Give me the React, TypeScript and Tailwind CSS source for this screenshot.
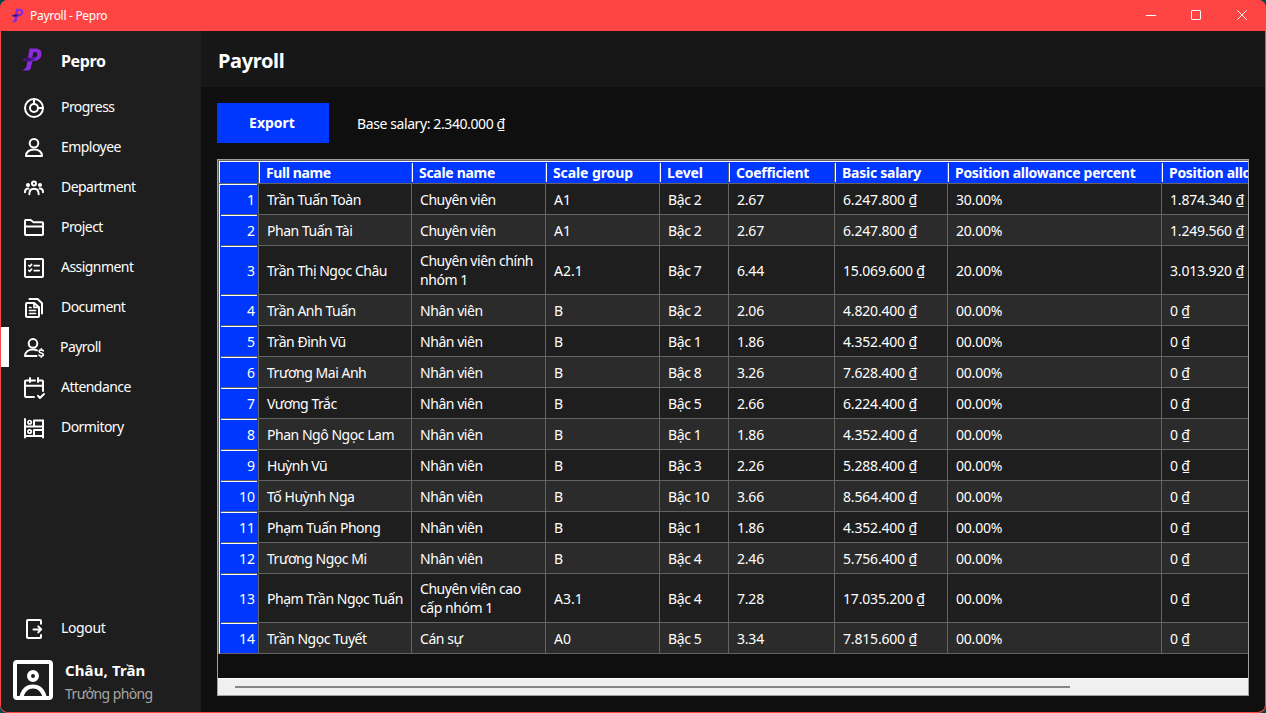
import type { ReactNode } from "react";

function Icon({ children }: { children: ReactNode }) {
  return (
    <svg
      className="h-6 w-6 shrink-0"
      viewBox="0 0 24 24"
      fill="none"
      stroke="#ffffff"
      strokeWidth="2"
      strokeLinecap="round"
      strokeLinejoin="round"
    >
      {children}
    </svg>
  );
}

const icons = {
  progress: (
    <Icon>
      <circle cx="12" cy="12" r="9" />
      <circle cx="12" cy="12" r="4" />
      <path d="M12 3v5M16 12h5" />
    </Icon>
  ),
  employee: (
    <Icon>
      <circle cx="12" cy="7.3" r="4.3" />
      <path d="M4 20C4 15.8 7.4 13.4 12 13.4s8 2.4 8 6.6z" />
    </Icon>
  ),
  department: (
    <Icon>
      <circle cx="12" cy="7.6" r="2" />
      <circle cx="6" cy="9" r="2.1" fill="#ffffff" stroke="none" />
      <circle cx="18" cy="9" r="2.1" fill="#ffffff" stroke="none" />
      <path d="M7.3 18.2c0-3.6 2-5.4 4.7-5.4s4.7 1.8 4.7 5.4M3 16.2c0-2.4 1-3.6 3.4-3.6M21 16.2c0-2.4-1-3.6-3.4-3.6" />
    </Icon>
  ),
  project: (
    <Icon>
      <path d="M3 18.2V4.8Q3 4 3.8 4H8.6L11.6 6.2H20.2Q21 6.2 21 7V18.2Q21 19 20.2 19H3.8Q3 19 3 18.2Z" />
      <path d="M3 10.5H21" />
    </Icon>
  ),
  assignment: (
    <Icon>
      <rect x="3" y="3" width="18" height="18" rx="1" />
      <path d="M6.8 9.5l1 1L9.6 8.4M6.8 14.3l1 1 1.8-2.1M12.2 9.6h5M12.2 14.6h5" strokeWidth="1.7" />
    </Icon>
  ),
  document: (
    <Icon>
      <path d="M5 7H12.2L17 11.2V20Q17 21 16 21H5Q4 21 4 20V8Q4 7 5 7Z" />
      <path d="M12 7.2V11.4H16.6M7.5 11.5H9M7.5 14.5H13.5M7.5 17.5H13.5" strokeWidth="1.7" />
      <path d="M7.5 3H15.6L20 7.2V17.6" />
    </Icon>
  ),
  payroll: (
    <Icon>
      <circle cx="11" cy="7.4" r="4.3" />
      <path d="M15 14.4C13.8 13.8 12.6 13.5 11 13.5C6.4 13.5 3.1 16 3 20H14.5" />
      <path
        d="M21.3 14.9C20.8 14.2 20 13.9 19.2 13.9C18 13.9 17.2 14.5 17.2 15.4C17.2 17.6 21.4 16.3 21.4 18.6C21.4 19.6 20.4 20.1 19.3 20.1C18.4 20.1 17.5 19.8 17 19.1M19.3 12.8V13.8M19.3 20.2V21.3"
        strokeWidth="1.6"
      />
    </Icon>
  ),
  attendance: (
    <Icon>
      <path d="M12 21H4Q3 21 3 20V5.5Q3 4.5 4 4.5H7M8 4.5H13M17 4.5H20Q21 4.5 21 5.5V15M3 9.8H21M8 2V6M16 2V6" />
      <path d="M16 19.8L18 22L22 18" />
    </Icon>
  ),
  dormitory: (
    <Icon>
      <path d="M3 3V21.5M21 4.5V21.5M3 10.5H21M3 20H21" />
      <path d="M12 10V4.5H20.6M12 20V14H20.6" />
      <circle cx="7.6" cy="6.2" r="1.7" strokeWidth="1.7" />
      <circle cx="7.6" cy="15.5" r="1.7" strokeWidth="1.7" />
    </Icon>
  ),
  logout: (
    <Icon>
      <path
        d="M19 7.6V3.9Q19 3 18.1 3H5.9Q5 3 5 3.9V20.1Q5 21 5.9 21H18.1Q19 21 19 20.1V17.2"
        strokeLinecap="butt"
      />
      <path d="M11.5 12.4H19M16.3 9.4L19.2 12.4L16.3 15.4" />
    </Icon>
  ),
};

function Logo({ className }: { className: string }) {
  return (
    <svg className={className} viewBox="0 0 21 23">
      <defs>
        <linearGradient id="logo-sweep" x1="0" y1="0" x2="1" y2="0">
          <stop offset="0" stopColor="#5b1a9e" />
          <stop offset="0.4" stopColor="#35106b" />
          <stop offset="1" stopColor="#8a2be2" />
        </linearGradient>
      </defs>
      <path
        d="M8 0.5H13.5C18 0.5 20.5 2.8 20 6.6C19.5 11 16 13.3 11.5 13.3H11L9.3 20Q8.7 22.5 6 22.5H0C3.5 21.5 4.6 20 5.2 17.5Z M12 4L10.6 9.8H12.2C14.4 9.8 15.6 8.6 15.9 6.9C16.2 5 15.2 4 13.4 4Z"
        fill="#8a2be2"
        fillRule="evenodd"
      />
      <path d="M1 11.5Q3.8 9.6 7 9.8L16.4 9.3Q13.5 13.3 9.5 13.3L5 13.4Q2.5 13.4 1 11.5Z" fill="url(#logo-sweep)" />
    </svg>
  );
}

const navItems = [
  { label: "Progress", icon: icons.progress },
  { label: "Employee", icon: icons.employee },
  { label: "Department", icon: icons.department },
  { label: "Project", icon: icons.project },
  { label: "Assignment", icon: icons.assignment },
  { label: "Document", icon: icons.document },
  { label: "Payroll", icon: icons.payroll, active: true },
  { label: "Attendance", icon: icons.attendance },
  { label: "Dormitory", icon: icons.dormitory },
];

const columns = [
  { title: "Full name", width: "w-[153px]", head: "tracking-[-0.4px]", body: "tracking-[-0.47px]" },
  { title: "Scale name", width: "w-[134px]", head: "tracking-[-0.3px]", body: "tracking-[-0.45px]" },
  { title: "Scale group", width: "w-[114px]", head: "tracking-[-0.1px]", body: "tracking-normal" },
  { title: "Level", width: "w-[69px]", head: "tracking-[-0.1px]", body: "tracking-[-0.38px]" },
  { title: "Coefficient", width: "w-[106px]", head: "tracking-[-0.27px]", body: "tracking-[-0.2px]" },
  { title: "Basic salary", width: "w-[113px]", head: "tracking-[-0.25px]", body: "tracking-[-0.18px]" },
  { title: "Position allowance percent", width: "w-[214px]", head: "tracking-[-0.3px]", body: "tracking-[-0.2px]" },
  { title: "Position allowance", width: "w-[160px]", head: "tracking-[-0.3px]", body: "tracking-[-0.18px]" },
];

const rows = [
  ["Trần Tuấn Toàn", "Chuyên viên", "A1", "Bậc 2", "2.67", "6.247.800 ₫", "30.00%", "1.874.340 ₫"],
  ["Phan Tuấn Tài", "Chuyên viên", "A1", "Bậc 2", "2.67", "6.247.800 ₫", "20.00%", "1.249.560 ₫"],
  ["Trần Thị Ngọc Châu", "Chuyên viên chính\nnhóm 1", "A2.1", "Bậc 7", "6.44", "15.069.600 ₫", "20.00%", "3.013.920 ₫"],
  ["Trần Anh Tuấn", "Nhân viên", "B", "Bậc 2", "2.06", "4.820.400 ₫", "00.00%", "0 ₫"],
  ["Trần Đình Vũ", "Nhân viên", "B", "Bậc 1", "1.86", "4.352.400 ₫", "00.00%", "0 ₫"],
  ["Trương Mai Anh", "Nhân viên", "B", "Bậc 8", "3.26", "7.628.400 ₫", "00.00%", "0 ₫"],
  ["Vương Trắc", "Nhân viên", "B", "Bậc 5", "2.66", "6.224.400 ₫", "00.00%", "0 ₫"],
  ["Phan Ngô Ngọc Lam", "Nhân viên", "B", "Bậc 1", "1.86", "4.352.400 ₫", "00.00%", "0 ₫"],
  ["Huỳnh Vũ", "Nhân viên", "B", "Bậc 3", "2.26", "5.288.400 ₫", "00.00%", "0 ₫"],
  ["Tố Huỳnh Nga", "Nhân viên", "B", "Bậc 10", "3.66", "8.564.400 ₫", "00.00%", "0 ₫"],
  ["Phạm Tuấn Phong", "Nhân viên", "B", "Bậc 1", "1.86", "4.352.400 ₫", "00.00%", "0 ₫"],
  ["Trương Ngọc Mi", "Nhân viên", "B", "Bậc 4", "2.46", "5.756.400 ₫", "00.00%", "0 ₫"],
  ["Phạm Trần Ngọc Tuấn", "Chuyên viên cao\ncấp nhóm 1", "A3.1", "Bậc 4", "7.28", "17.035.200 ₫", "00.00%", "0 ₫"],
  ["Trần Ngọc Tuyết", "Cán sự", "A0", "Bậc 5", "3.34", "7.815.600 ₫", "00.00%", "0 ₫"],
];

function TitleBar() {
  return (
    <div className="flex h-[31px] shrink-0 items-center bg-[#ff4444] pl-[11px]">
      <Logo className="h-[15px] w-[13px]" />
      <span className="ml-1.5 text-[12px] tracking-[-0.3px] text-white">Payroll - Pepro</span>
      <svg className="ml-auto h-[31px] w-[138px]" viewBox="0 0 138 31" fill="none" stroke="#ffffff">
        <path d="M18 15.5H28" />
        <rect x="63.5" y="10.5" width="9" height="9" rx="0.6" />
        <path d="M109.2 10.2L118.8 19.8M118.8 10.2L109.2 19.8" />
      </svg>
    </div>
  );
}

function Sidebar() {
  return (
    <aside className="flex w-[200px] shrink-0 flex-col bg-[#1e1e1e]">
      <div className="flex h-14 shrink-0 items-center pb-px pl-5 pt-1">
        <Logo className="h-[23px] w-[22px] -translate-y-px" />
        <span className="ml-[18px] text-[16px] font-bold tracking-[-0.35px]">Pepro</span>
      </div>
      <nav>
        {navItems.map((item) => (
          <div key={item.label} className="flex h-10 items-center">
            <div className={item.active ? "h-full w-2 bg-white" : "h-full w-2"} />
            <div className="ml-[13px] mt-0.5 h-6 w-6">{item.icon}</div>
            <span
              className={
                item.active ? "-mt-0.5 ml-[14px] tracking-[-0.55px]" : "-mt-0.5 ml-[15px] tracking-[-0.55px]"
              }
            >
              {item.label}
            </span>
          </div>
        ))}
      </nav>
      <div className="mt-auto flex h-10 items-center pl-[21px]">
        <div className="mt-0.5 h-6 w-6">{icons.logout}</div>
        <span className="-mt-0.5 ml-[15px] tracking-[-0.35px]">Logout</span>
      </div>
      <div className="flex h-16 items-center pl-3">
        <svg className="h-10 w-10" viewBox="0 0 40 40" fill="none" stroke="#ffffff" strokeWidth="4">
          <rect x="2" y="2" width="36" height="36" rx="2" />
          <circle cx="20" cy="16" r="4" />
          <path d="M8 38C10 30 14 26.5 20 26.5S30 30 32 38" />
        </svg>
        <div className="ml-3 flex flex-col pt-1">
          <span className="h-6 text-[15px] font-bold leading-6 tracking-[0.1px]">Châu, Trần</span>
          <span className="h-6 leading-6 tracking-[-0.6px] text-[#a6a6a6]">Trưởng phòng</span>
        </div>
      </div>
    </aside>
  );
}

function PayrollTable() {
  return (
    <div className="flex h-[537px] w-[1032px] flex-col overflow-hidden border border-[#a0a0a0]">
      <div className="h-[518px] overflow-hidden">
        <div className="flex flex-col border-l border-t border-[#646464]">
          <div className="flex h-[23px] w-max shrink-0 border-b border-t border-b-[#646464] border-t-white bg-[#0037ff]">
            <div className="w-[40px] shrink-0 border-l border-r border-l-white border-r-[#646464]" />
            {columns.map((column, i) => (
              <div key={column.title} className={`flex shrink-0 items-center ${column.width}`}>
                <div className={i === 0 ? "h-full w-px bg-white" : "h-[19px] w-px bg-white"} />
                <span className={`ml-1.5 flex-1 whitespace-nowrap font-bold leading-[19px] ${column.head}`}>
                  {column.title}
                </span>
                <div className={i === 7 ? "hidden" : "h-[19px] w-px bg-[#646464]"} />
              </div>
            ))}
          </div>
          {rows.map((row, r) => (
            <div
              key={row[0]}
              className={`flex w-max shrink-0 ${row[1].includes("\n") ? "h-[49px]" : "h-[31px]"} ${
                r % 2 === 0 ? "bg-[#1e1e1e]" : "bg-[#2b2b2b]"
              }`}
            >
              <div
                className={`flex w-[40px] flex-col border-l border-r border-l-white border-r-[#646464] bg-[#0037ff] ${
                  r === 13 ? "border-b border-b-[#646464]" : ""
                }`}
              >
                <div className={r === 0 ? "mr-px h-px bg-white" : "mx-px h-px bg-white"} />
                <div className="flex flex-1 items-center justify-end pr-[3px]">{r + 1}</div>
                <div className={r === 13 ? "hidden" : "mx-px h-px bg-[#646464]"} />
              </div>
              {row.map((text, c) => (
                <div
                  key={c}
                  className={`flex items-center whitespace-pre border-b border-r border-[#646464] pl-2 leading-[19px] ${
                    text.includes("\n") ? "pb-px" : "pt-px"
                  } ${columns[c].width} ${columns[c].body}`}
                >
                  {text}
                </div>
              ))}
            </div>
          ))}
        </div>
      </div>
      <div className="flex flex-1 items-center border-t border-white bg-[#f0f0f0] pl-[17px]">
        <div className="h-0.5 w-[835px] bg-[#868686]" />
      </div>
    </div>
  );
}

export default function App() {
  return (
    <div className="h-[713px] w-[1266px] overflow-hidden bg-[#004a4a] font-['Noto_Sans',sans-serif] text-[14px] text-white">
      <div className="flex h-full flex-col overflow-hidden rounded-lg border-b border-[#ff4444] bg-[#ff4444]">
        <TitleBar />
        <div className="mx-px flex min-h-0 flex-1 overflow-hidden rounded-b-[7px] bg-[#0f0f0f]">
          <Sidebar />
          <main className="flex min-w-0 flex-1 flex-col">
            <header className="flex h-14 shrink-0 items-center bg-[#171717] pl-[17px] pt-1 text-[20px] font-bold tracking-[-0.35px]">
              Payroll
            </header>
            <div className="flex flex-col gap-4 pl-4 pt-4">
              <div className="flex h-10 items-center">
                <button className="h-10 w-28 bg-[#0037ff] pb-0.5 pr-0.5 font-bold">Export</button>
                <span className="ml-7 tracking-[-0.4px]">Base salary: 2.340.000 ₫</span>
              </div>
              <PayrollTable />
            </div>
          </main>
        </div>
      </div>
    </div>
  );
}
